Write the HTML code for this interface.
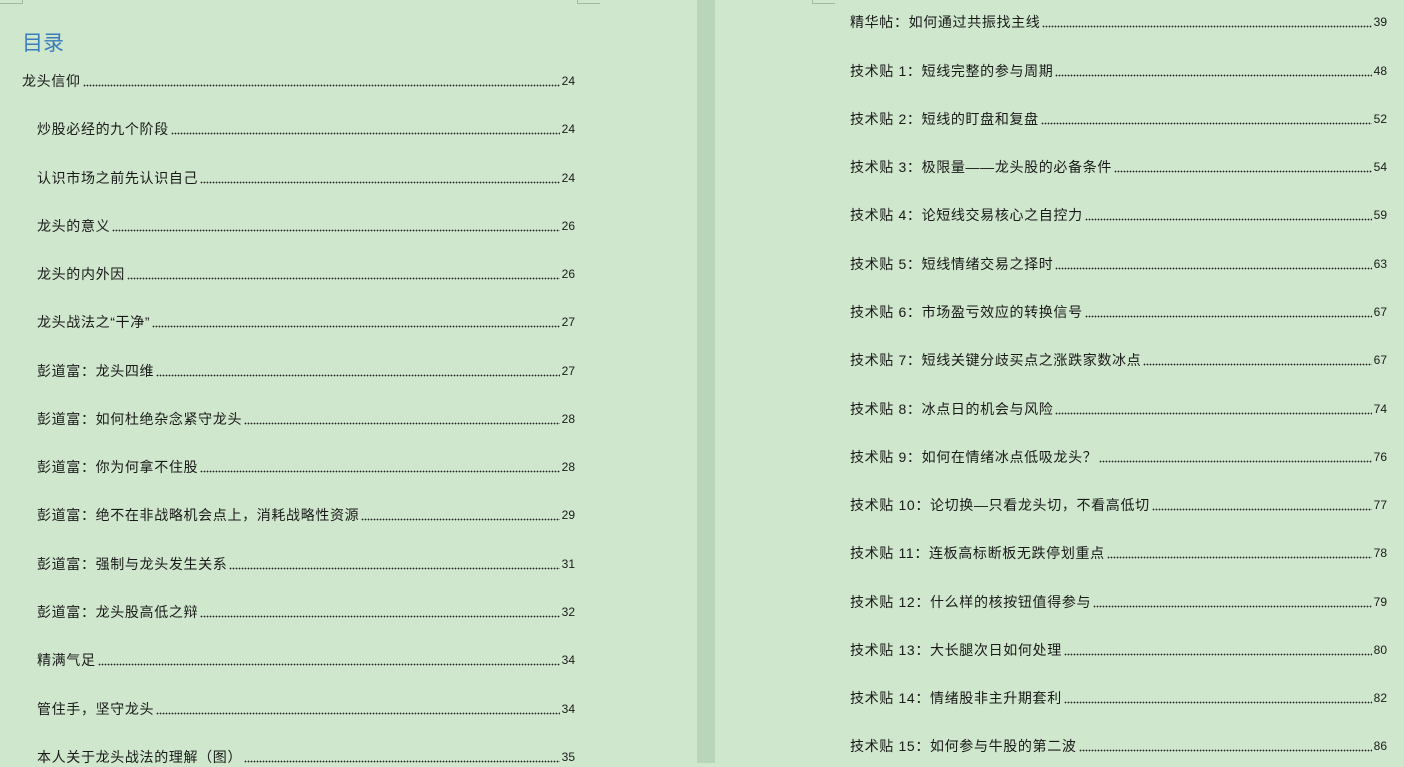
<!DOCTYPE html>
<html><head><meta charset="utf-8">
<style>
html,body{margin:0;padding:0}
body{width:1404px;height:763px;overflow:hidden;background:#cfe7cc;position:relative;font-family:"Liberation Sans","Noto Sans CJK SC",sans-serif;color:#1a1a1a}
.gap{position:absolute;left:697px;top:0;width:18px;height:763px;background:#b9d6bb}
.mark{position:absolute;top:0;height:3px;border-right:1px solid #a8b8a8;border-bottom:1px solid #a8b8a8}
.row{position:absolute;height:20px;line-height:20px;display:flex;font-size:14px;white-space:nowrap}
.row span:first-child{letter-spacing:0.65px}
.row .d{flex:1;margin:0 2px;background-image:radial-gradient(circle,#222 0.7px,transparent 1px);background-size:3px 3px;background-repeat:repeat-x;background-position:0 13px}
.row .n{font-size:12px}
.title{position:absolute;left:22px;top:27px;font-size:21px;color:#3a7dbb;font-family:"Liberation Sans","Noto Sans CJK SC",sans-serif}
</style></head><body>
<div class="gap"></div>
<div class="mark" style="left:0;width:22px"></div>
<div class="mark" style="left:577px;width:22px;border-right:none;border-left:1px solid #a8b8a8"></div>
<div class="mark" style="left:812px;width:22px;border-left:1px solid #a8b8a8;border-right:none"></div>
<div class="title">目录</div>

<div class="row" style="left:22px;width:553px;top:71px"><span>龙头信仰</span><span class="d"></span><span class="n">24</span></div>
<div class="row" style="left:37px;width:538px;top:119px"><span>炒股必经的九个阶段</span><span class="d"></span><span class="n">24</span></div>
<div class="row" style="left:37px;width:538px;top:168px"><span>认识市场之前先认识自己</span><span class="d"></span><span class="n">24</span></div>
<div class="row" style="left:37px;width:538px;top:216px"><span>龙头的意义</span><span class="d"></span><span class="n">26</span></div>
<div class="row" style="left:37px;width:538px;top:264px"><span>龙头的内外因</span><span class="d"></span><span class="n">26</span></div>
<div class="row" style="left:37px;width:538px;top:312px"><span>龙头战法之“干净”</span><span class="d"></span><span class="n">27</span></div>
<div class="row" style="left:37px;width:538px;top:361px"><span>彭道富：龙头四维</span><span class="d"></span><span class="n">27</span></div>
<div class="row" style="left:37px;width:538px;top:409px"><span>彭道富：如何杜绝杂念紧守龙头</span><span class="d"></span><span class="n">28</span></div>
<div class="row" style="left:37px;width:538px;top:457px"><span>彭道富：你为何拿不住股</span><span class="d"></span><span class="n">28</span></div>
<div class="row" style="left:37px;width:538px;top:505px"><span>彭道富：绝不在非战略机会点上，消耗战略性资源</span><span class="d"></span><span class="n">29</span></div>
<div class="row" style="left:37px;width:538px;top:554px"><span>彭道富：强制与龙头发生关系</span><span class="d"></span><span class="n">31</span></div>
<div class="row" style="left:37px;width:538px;top:602px"><span>彭道富：龙头股高低之辩</span><span class="d"></span><span class="n">32</span></div>
<div class="row" style="left:37px;width:538px;top:650px"><span>精满气足</span><span class="d"></span><span class="n">34</span></div>
<div class="row" style="left:37px;width:538px;top:699px"><span>管住手，坚守龙头</span><span class="d"></span><span class="n">34</span></div>
<div class="row" style="left:37px;width:538px;top:747px"><span>本人关于龙头战法的理解（图）</span><span class="d"></span><span class="n">35</span></div>

<div class="row" style="left:850px;width:537px;top:12px"><span>精华帖：如何通过共振找主线</span><span class="d"></span><span class="n">39</span></div>
<div class="row" style="left:850px;width:537px;top:61px"><span>技术贴 1：短线完整的参与周期</span><span class="d"></span><span class="n">48</span></div>
<div class="row" style="left:850px;width:537px;top:109px"><span>技术贴 2：短线的盯盘和复盘</span><span class="d"></span><span class="n">52</span></div>
<div class="row" style="left:850px;width:537px;top:157px"><span>技术贴 3：极限量——龙头股的必备条件</span><span class="d"></span><span class="n">54</span></div>
<div class="row" style="left:850px;width:537px;top:205px"><span>技术贴 4：论短线交易核心之自控力</span><span class="d"></span><span class="n">59</span></div>
<div class="row" style="left:850px;width:537px;top:254px"><span>技术贴 5：短线情绪交易之择时</span><span class="d"></span><span class="n">63</span></div>
<div class="row" style="left:850px;width:537px;top:302px"><span>技术贴 6：市场盈亏效应的转换信号</span><span class="d"></span><span class="n">67</span></div>
<div class="row" style="left:850px;width:537px;top:350px"><span>技术贴 7：短线关键分歧买点之涨跌家数冰点</span><span class="d"></span><span class="n">67</span></div>
<div class="row" style="left:850px;width:537px;top:399px"><span>技术贴 8：冰点日的机会与风险</span><span class="d"></span><span class="n">74</span></div>
<div class="row" style="left:850px;width:537px;top:447px"><span>技术贴 9：如何在情绪冰点低吸龙头？</span><span class="d"></span><span class="n">76</span></div>
<div class="row" style="left:850px;width:537px;top:495px"><span>技术贴 10：论切换—只看龙头切，不看高低切</span><span class="d"></span><span class="n">77</span></div>
<div class="row" style="left:850px;width:537px;top:543px"><span>技术贴 11：连板高标断板无跌停划重点</span><span class="d"></span><span class="n">78</span></div>
<div class="row" style="left:850px;width:537px;top:592px"><span>技术贴 12：什么样的核按钮值得参与</span><span class="d"></span><span class="n">79</span></div>
<div class="row" style="left:850px;width:537px;top:640px"><span>技术贴 13：大长腿次日如何处理</span><span class="d"></span><span class="n">80</span></div>
<div class="row" style="left:850px;width:537px;top:688px"><span>技术贴 14：情绪股非主升期套利</span><span class="d"></span><span class="n">82</span></div>
<div class="row" style="left:850px;width:537px;top:736px"><span>技术贴 15：如何参与牛股的第二波</span><span class="d"></span><span class="n">86</span></div>
</body></html>
